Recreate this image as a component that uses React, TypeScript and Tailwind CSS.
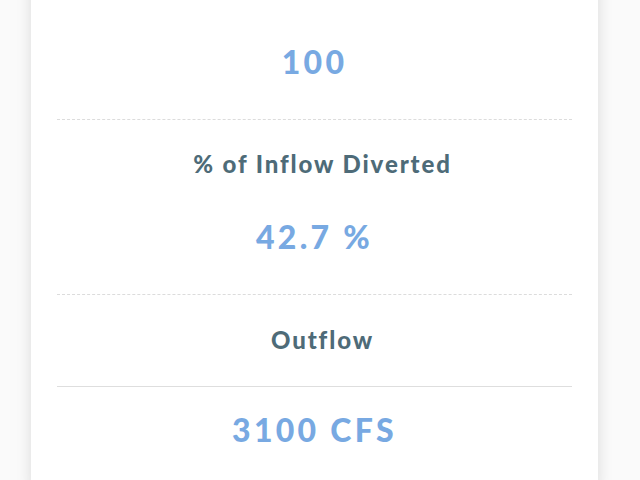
import React from 'react';

interface StatProps {
  label: string;
  value: string;
  solid?: boolean;
}

const labelCls = 'h-[30px] pl-[16px] text-center text-[24px] leading-[30px] font-black tracking-[1.9px] text-[#4e6b78]';
const valueCls = 'h-[40px] text-center text-[32px] leading-[40px] font-black tracking-[3.3px] text-[#78a9e2]';

const Stat: React.FC<StatProps> = ({ label, value, solid }) => {
  if (solid) {
    return (
      <div className="border-t border-dashed border-[#dcdcdc] pt-[30px]">
        <div className={labelCls}>{label}</div>
        <div className="mt-[31px] border-t border-[#dedede] pt-[23px] pb-[40px]">
          <div className={valueCls}>{value}</div>
        </div>
      </div>
    );
  }
  return (
    <div className="border-t border-dashed border-[#dcdcdc] pt-[29px] pb-[37px] first:border-t-0">
      <div className={labelCls}>{label}</div>
      <div className={`mt-[38px] ${valueCls}`}>{value}</div>
    </div>
  );
};

export default function App() {
  return (
    <div className="h-[480px] overflow-hidden bg-[#fafafa]" style={{ fontFamily: 'Lato, "Open Sans", sans-serif' }}>
      <div className="ml-[31px] mt-[-55px] w-[567px] bg-white px-[26px] shadow-[0_0_14px_rgba(0,0,0,0.13)]">
        <Stat label="Total Diverted" value="100" />
        <Stat label="% of Inflow Diverted" value="42.7 %" />
        <Stat label="Outflow" value="3100 CFS" solid />
      </div>
    </div>
  );
}
